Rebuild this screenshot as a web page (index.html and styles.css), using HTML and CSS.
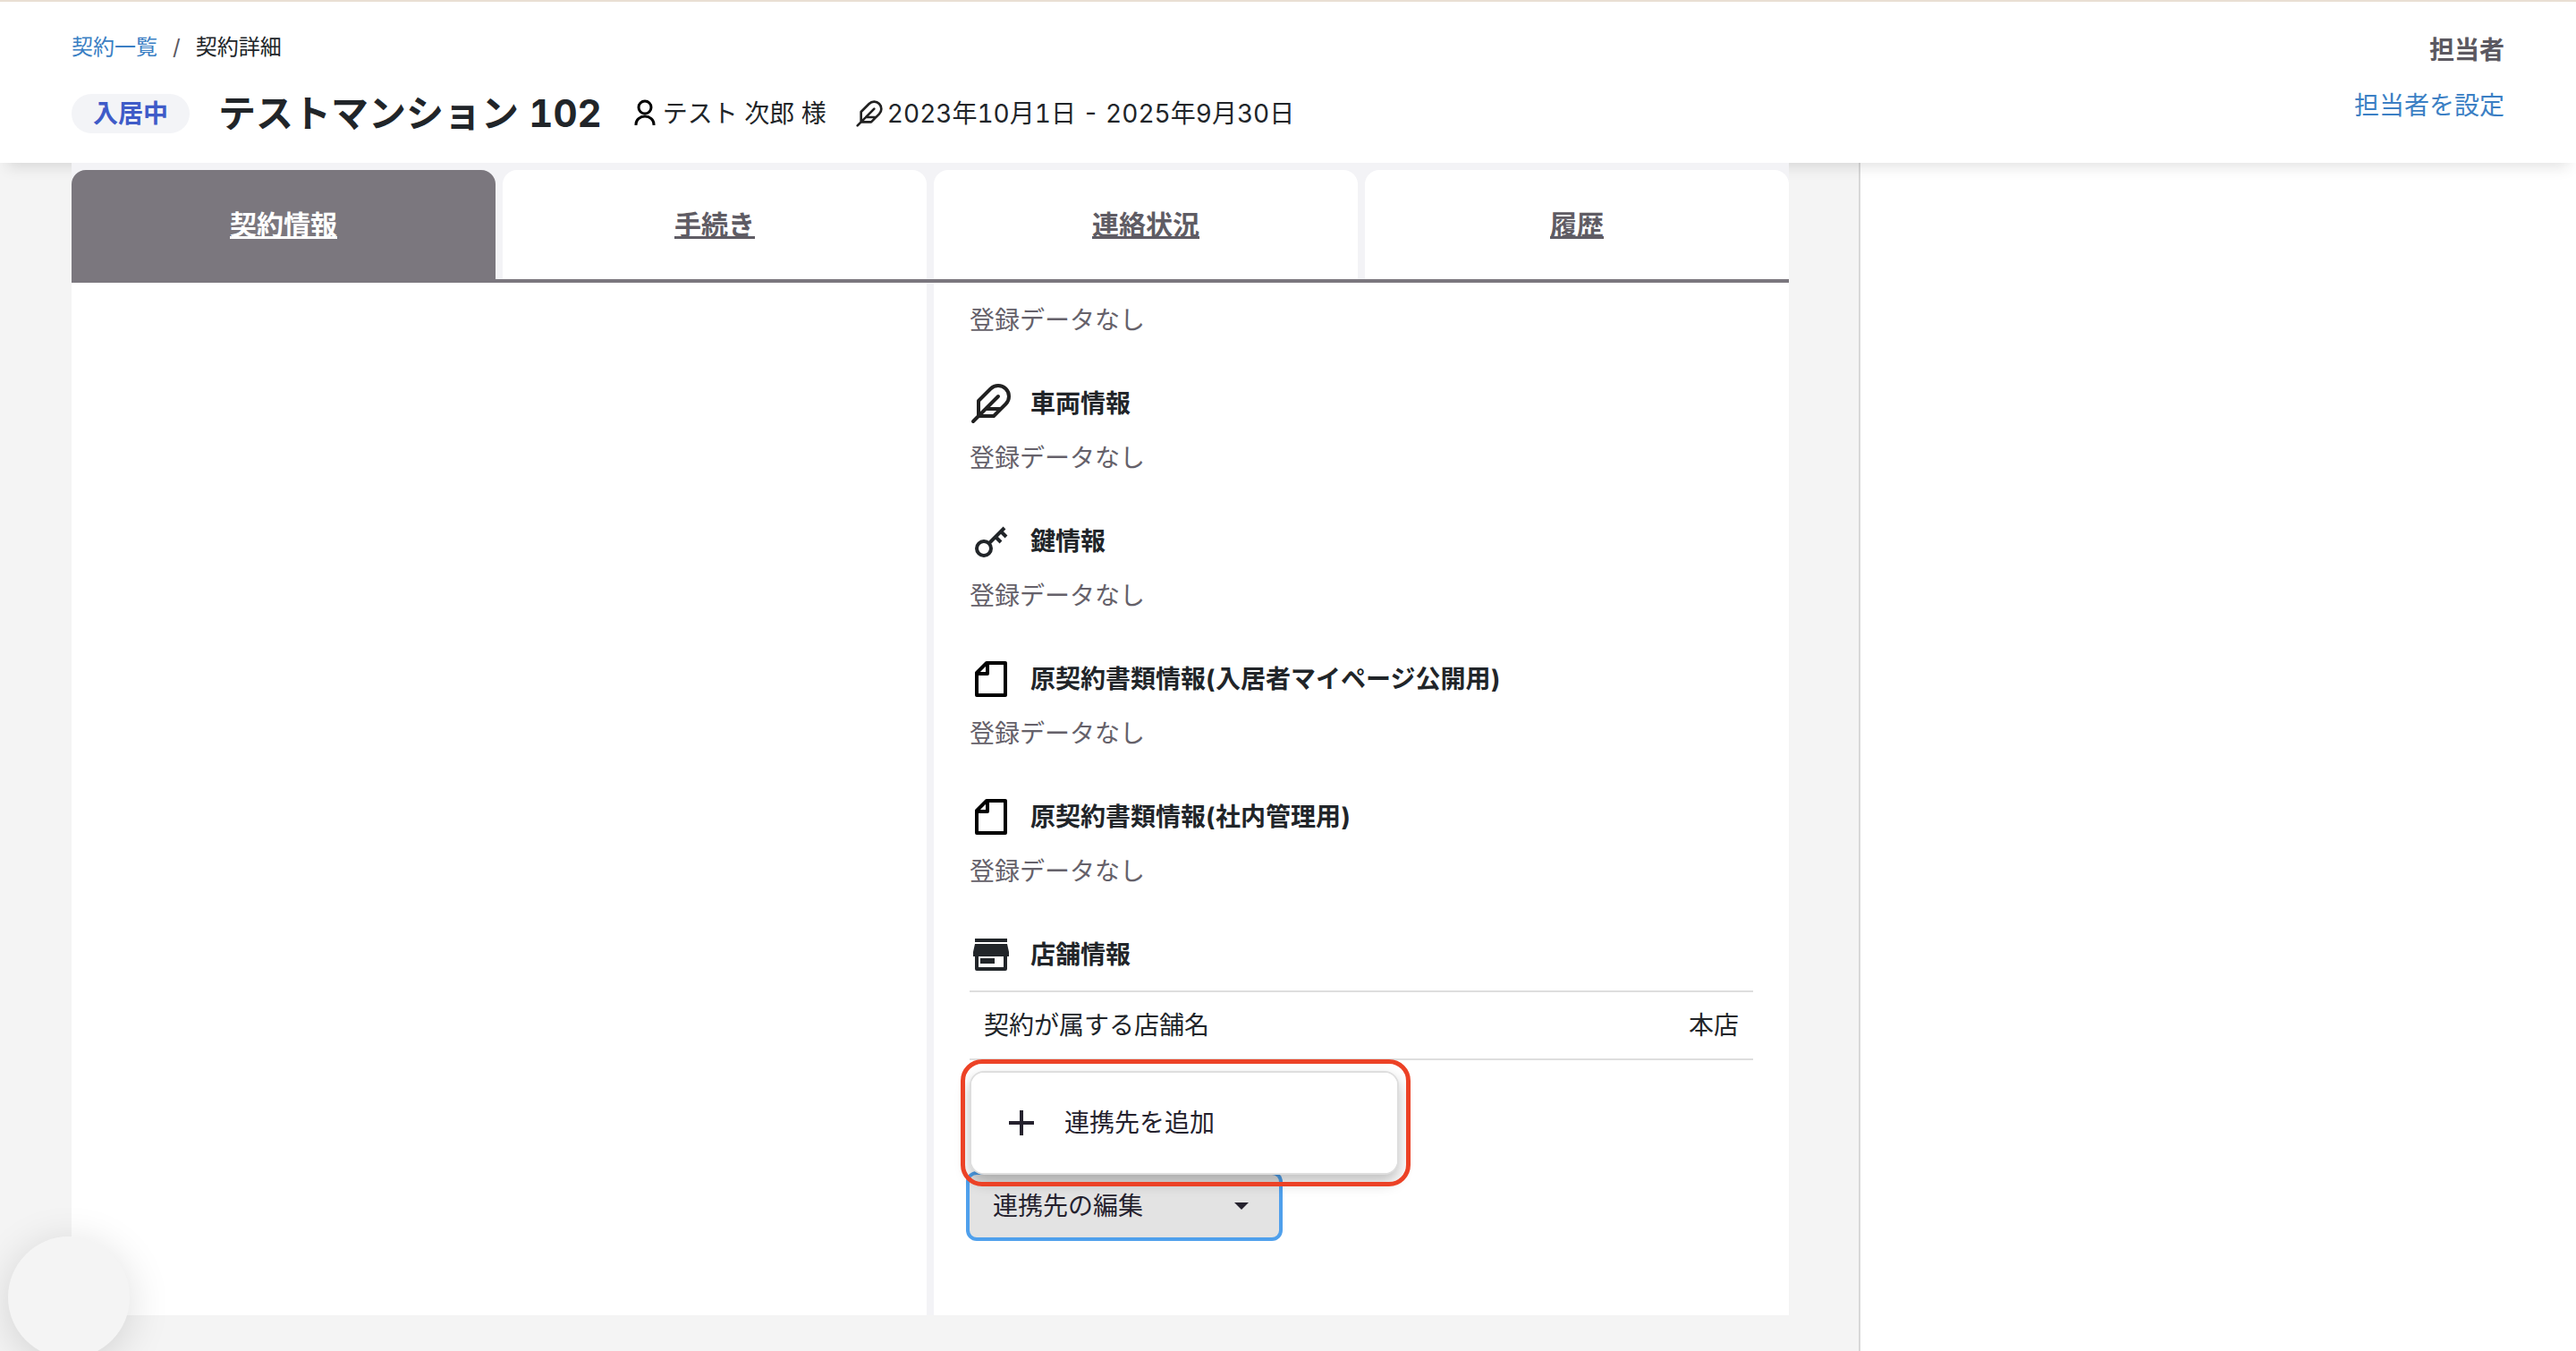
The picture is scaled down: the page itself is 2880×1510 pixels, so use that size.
FILE: index.html
```html
<!DOCTYPE html>
<html lang="ja">
<head>
    <meta charset="UTF-8">
    <meta name="viewport" content="width=device-width, initial-scale=1.0">
    <title>契約詳細</title>
    <link rel="stylesheet" href="styles.css">
</head>

<body>
    <!-- ヘッダー -->
    <header class="header">
        <div class="header-main">
            <nav class="breadcrumb">
                <a href="#contracts">契約一覧</a>
                <span class="slash">/</span>
                <span>契約詳細</span>
            </nav>
            <div class="title-row">
                <span class="badge">入居中</span>
                <h1>テストマンション 102</h1>
                <span class="meta">
                    <svg class="meta-icon user" viewBox="0 0 32 32">
                        <circle cx="16" cy="9" r="7"/>
                        <path d="M6 29v-1a10 9 0 0 1 20 0v1"/>
                    </svg>
                    テスト 次郎 様
                </span>
                <span class="meta">
                    <svg class="meta-icon feather" viewBox="0 0 24 24">
                        <path d="M20.24 12.24a6 6 0 0 0-8.49-8.49L5 10.5V19h8.5zM16 8L2 22M17.5 15H9"/>
                    </svg>
                    2023年10月1日 - 2025年9月30日
                </span>
            </div>
        </div>
        <div class="staff">
            <span class="staff-label">担当者</span>
            <a href="#staff">担当者を設定</a>
        </div>
    </header>

    <div class="page">
        <main class="main">
            <!-- タブ -->
            <nav class="tabs">
                <a href="#info" class="active">契約情報</a>
                <a href="#procedure">手続き</a>
                <a href="#contact">連絡状況</a>
                <a href="#history">履歴</a>
            </nav>

            <div class="columns">
                <div class="column"></div>

                <div class="column">
                    <section class="item">
                        <p>登録データなし</p>
                    </section>

                    <section class="item">
                        <h2>
                            <svg class="icon feather" viewBox="0 0 24 24">
                                <path d="M20.24 12.24a6 6 0 0 0-8.49-8.49L5 10.5V19h8.5zM16 8L2 22M17.5 15H9"/>
                            </svg>
                            車両情報
                        </h2>
                        <p>登録データなし</p>
                    </section>

                    <section class="item">
                        <h2>
                            <svg class="icon key" viewBox="0 0 48 48">
                                <circle cx="16" cy="32" r="8"/>
                                <path d="M22 26L39 9M29 19l6 6M35 13l6 6"/>
                            </svg>
                            鍵情報
                        </h2>
                        <p>登録データなし</p>
                    </section>

                    <section class="item">
                        <h2>
                            <svg class="icon doc" viewBox="0 0 48 48">
                                <path d="M19 6h21v36H8V17zM20 6v12H8"/>
                            </svg>
                            原契約書類情報(入居者マイページ公開用)
                        </h2>
                        <p>登録データなし</p>
                    </section>

                    <section class="item">
                        <h2>
                            <svg class="icon doc" viewBox="0 0 48 48">
                                <path d="M19 6h21v36H8V17zM20 6v12H8"/>
                            </svg>
                            原契約書類情報(社内管理用)
                        </h2>
                        <p>登録データなし</p>
                    </section>

                    <section class="item">
                        <h2>
                            <svg class="icon shop" viewBox="0 0 48 48">
                                <path d="M6 6h36v4H6zM6 12h36l2 9v5h-2v14a2 2 0 0 1-2 2H8a2 2 0 0 1-2-2V26H4v-5zM10 26v12h28V26z"/>
                                <path d="M12 28h16v6H12z"/>
                            </svg>
                            店舗情報
                        </h2>
                        <table>
                            <tr>
                                <th scope="row">契約が属する店舗名</th>
                                <td>本店</td>
                            </tr>
                        </table>
                    </section>

                    <!-- 連携先メニュー -->
                    <div class="dropdown">
                        <div class="menu">
                            <button type="button" class="menu-item">
                                <svg class="plus" viewBox="0 0 28 28">
                                    <path d="M14 0v28M0 14h28"/>
                                </svg>
                                連携先を追加
                            </button>
                        </div>
                        <button type="button" class="toggle" aria-haspopup="true" aria-expanded="true">
                            連携先の編集
                            <svg class="caret" viewBox="0 0 16 8">
                                <path d="M0 0h16L8 8z"/>
                            </svg>
                        </button>
                    </div>
                </div>
            </div>
        </main>
        <aside class="side"></aside>
    </div>

    <button type="button" class="float-button" aria-label="チャット"></button>
</body>
</html>
```
FILE: styles.css
```css
/* リセット */
* {
    margin: 0;
    padding: 0;
    box-sizing: border-box;
}

body {
    min-height: 100vh;
    display: flex;
    flex-direction: column;
    font-family: Inter, "Noto Sans CJK JP", sans-serif;
    font-size: 28px;
    font-variant-numeric: tabular-nums;
    line-height: 42px;
    color: #212529;
    background-color: #f4f4f4;
}

a {
    color: #3b7fc4;
    text-decoration: none;
}

button {
    font: inherit;
    color: #25222e;
    border: none;
    cursor: pointer;
}

svg {
    flex-shrink: 0;
    fill: none;
}

/* ヘッダー */
.header {
    position: relative;
    display: flex;
    justify-content: space-between;
    padding: 33px 80px 27px;
    border-top: 2px solid #e9dfd3;
    background-color: #fff;
    box-shadow: 0 12px 16px -8px rgba(0, 0, 0, 0.12);
}

.header-main {
    display: flex;
    flex-direction: column;
    gap: 28px;
}

.breadcrumb {
    display: flex;
    gap: 17px;
    font-size: 24px;
    line-height: 36px;
}

.slash {
    color: #5b5860;
}

.title-row {
    display: flex;
    align-items: center;
    gap: 32px;
}

.badge {
    padding: 0 24px;
    border-radius: 22px;
    font-weight: 700;
    line-height: 44px;
    color: #3f5bc8;
    background-color: #f3f4f7;
}

h1 {
    font-size: 42px;
    line-height: 56px;
}

.meta {
    display: flex;
    align-items: center;
    gap: 4px;
}

.meta-icon {
    width: 32px;
    height: 32px;
}

.user {
    stroke: #000;
    stroke-width: 3;
}

.feather {
    stroke: #212121;
    stroke-width: 2;
    stroke-linecap: round;
    stroke-linejoin: round;
}

.staff {
    display: flex;
    flex-direction: column;
    align-items: flex-end;
    gap: 20px;
}

.staff-label {
    font-weight: 700;
    color: #5b5860;
}

/* 本体 */
.page {
    flex: 1;
    display: flex;
}

.main {
    position: relative;
    flex: 1;
    padding: 0 78px 40px 80px;
}

.side {
    width: 802px;
    border-left: 2px solid #d8d8d8;
    background-color: #fff;
}

/* タブ */
.tabs {
    display: grid;
    grid-template-columns: repeat(4, 1fr);
    gap: 8px;
    padding-top: 8px;
    border-bottom: 4px solid #7b777e;
    background-color: #f3f3f6;
}

.tabs a {
    padding: 40px 0;
    border-radius: 16px 16px 0 0;
    font-size: 30px;
    font-weight: 700;
    text-align: center;
    text-decoration: underline;
    color: #5f5c64;
    background-color: #fff;
}

.tabs a.active {
    color: #fff;
    background-color: #7b777e;
}

.columns {
    display: grid;
    grid-template-columns: 1fr 1fr;
    gap: 8px;
    background-color: #f3f3f6;
}

.column {
    padding: 21px 40px 87px;
    background-color: #fff;
}

/* 契約項目 */
.item {
    display: flex;
    flex-direction: column;
    gap: 16px;
    margin-bottom: 48px;
}

.item p {
    color: #65616a;
}

.item h2 {
    display: flex;
    align-items: center;
    gap: 20px;
    font-size: 28px;
    line-height: 48px;
}

.icon {
    width: 48px;
    height: 48px;
}

.key {
    stroke: #212529;
    stroke-width: 4;
}

.doc {
    stroke: #000;
    stroke-width: 4;
    stroke-linejoin: round;
}

.shop {
    fill: #212529;
    fill-rule: evenodd;
}

table {
    width: 100%;
    border-spacing: 0;
    border-top: 2px solid #dedede;
    border-bottom: 2px solid #dedede;
}

th,
td {
    padding: 16px;
    font-weight: 400;
    text-align: left;
}

td {
    text-align: right;
}

/* ドロップダウン */
.dropdown {
    position: relative;
    width: 346px;
    margin-top: 128px;
}

.item:has(+ .dropdown) {
    margin-bottom: 0;
}

.toggle {
    display: flex;
    align-items: center;
    justify-content: space-between;
    width: 100%;
    padding: 14px 34px 14px 26px;
    border-radius: 8px;
    background-color: #e3e3e3;
    box-shadow: 0 0 0 4px #4fa0ec;
}

.caret {
    width: 16px;
    height: 8px;
    fill: #25222e;
}

.menu {
    position: absolute;
    bottom: 100%;
    left: 0;
    width: 480px;
    border: 2px solid #dedede;
    border-radius: 16px;
    background-color: #fff;
    box-shadow: 0 8px 16px rgba(0, 0, 0, 0.25);
}

/* 強調枠 */
.menu::after {
    content: "";
    position: absolute;
    inset: -15px -15px -15px -12px;
    border: 5px solid #ec4226;
    border-radius: 24px;
    pointer-events: none;
}

.menu-item {
    display: flex;
    align-items: center;
    gap: 34px;
    width: 100%;
    padding: 35px 42px;
    border-radius: 14px;
    background-color: #fff;
}

.plus {
    width: 28px;
    height: 28px;
    stroke: #25222e;
    stroke-width: 4;
}

.float-button {
    position: fixed;
    left: 9px;
    bottom: -8px;
    width: 136px;
    height: 136px;
    border-radius: 50%;
    background-color: #f4f4f4;
    box-shadow: 0 8px 48px rgba(0, 0, 0, 0.14);
}
```
